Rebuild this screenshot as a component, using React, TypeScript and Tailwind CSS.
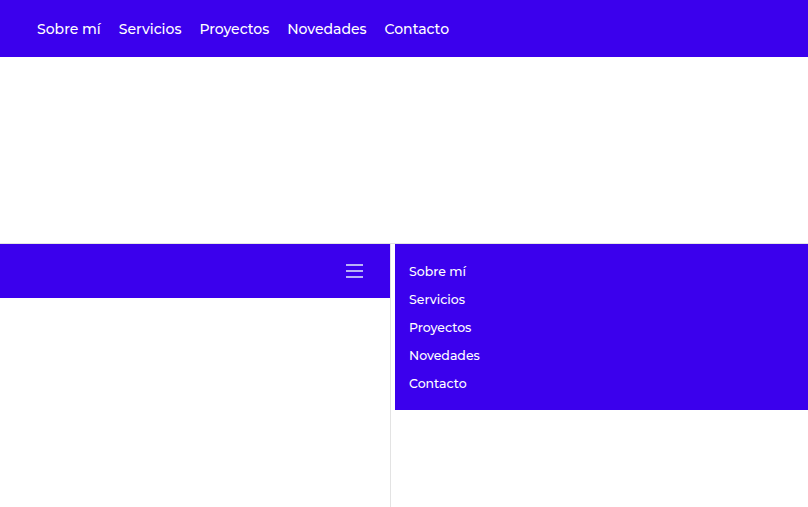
import React from 'react';

const links = ['Sobre mí', 'Servicios', 'Proyectos', 'Novedades', 'Contacto'];

const font = { fontFamily: 'Montserrat, "Open Sans", "Liberation Sans", sans-serif' };

const App: React.FC = () => {
  return (
    <div className="w-[808px] h-[507px] overflow-hidden bg-white flex flex-col" style={font}>
      {/* Desktop header */}
      <div className="h-[243px] shrink-0 flex flex-col">
        <nav className="h-[57px] bg-[#3b00ed] flex items-center gap-[18px] pl-[37px]">
          {links.map((l) => (
            <a key={l} className="text-white text-[14px] font-medium leading-none">
              {l}
            </a>
          ))}
        </nav>
      </div>
      <div className="h-px bg-[#e3e3e3] shrink-0" />

      {/* Mobile previews */}
      <div className="flex flex-1">
        <div className="w-[390px] shrink-0">
          <div className="h-[54px] bg-[#3b00ed] flex items-center justify-end pr-[27px]">
            <div className="flex flex-col gap-[4px] w-[17px]">
              <span className="h-[2px] bg-[#b9b2f7]" />
              <span className="h-[2px] bg-[#b9b2f7]" />
              <span className="h-[2px] bg-[#b9b2f7]" />
            </div>
          </div>
        </div>
        <div className="w-px bg-[#e3e3e3] shrink-0" />
        <div className="flex-1 pl-[4px]">
          <div className="h-[166px] bg-[#3b00ed] flex flex-col pl-[14px] pt-[14px]">
            {links.map((l) => (
              <a key={l} className="text-white text-[12.5px] font-medium h-[28px] flex items-center">
                {l}
              </a>
            ))}
          </div>
        </div>
      </div>
    </div>
  );
};

export default App;
